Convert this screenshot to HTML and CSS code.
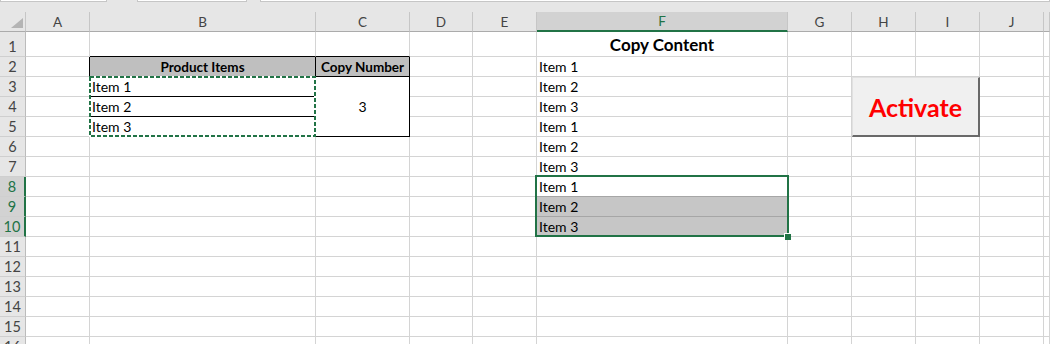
FILE: index.html
```html
<!DOCTYPE html>
<html lang="en">
<head>
    <meta charset="UTF-8">
    <meta name="viewport" content="width=device-width, initial-scale=1.0">
    <title>Copy Content</title>
    <link rel="stylesheet" href="styles.css">
</head>
<body>
    <div class="topbar">
        <div class="field field-name"></div>
        <div class="field field-fx"></div>
        <div class="field field-formula"></div>
    </div>
    <div class="sheet">
        <!-- column headers -->
        <div class="c ch corner"><span class="tri"></span></div>
        <div class="c ch">A</div><div class="c ch">B</div><div class="c ch">C</div><div class="c ch">D</div><div class="c ch">E</div>
        <div class="c ch on">F</div><div class="c ch">G</div><div class="c ch">H</div><div class="c ch">I</div><div class="c ch">J</div><div class="c ch"></div>

        <!-- row 1 -->
        <div class="c rh">1</div>
        <div class="c"></div><div class="c bk-b"></div><div class="c bk-b"></div><div class="c"></div><div class="c"></div>
        <div class="c title">Copy Content</div>
        <div class="c"></div><div class="c"></div><div class="c"></div><div class="c"></div><div class="c"></div>

        <!-- row 2 -->
        <div class="c rh">2</div>
        <div class="c bk-r"></div><div class="c th bk-r bk-b">Product Items</div><div class="c th bk-r bk-b">Copy Number</div><div class="c"></div><div class="c"></div>
        <div class="c">Item 1</div>
        <div class="c"></div><div class="c"></div><div class="c"></div><div class="c"></div><div class="c"></div>

        <!-- row 3 -->
        <div class="c rh">3</div>
        <div class="c bk-r"></div><div class="c bk-r bk-b">Item 1</div><div class="c merge bk-r bk-b">3</div><div class="c"></div><div class="c"></div>
        <div class="c">Item 2</div>
        <div class="c"></div><div class="c"></div><div class="c"></div><div class="c"></div><div class="c"></div>

        <!-- row 4 -->
        <div class="c rh">4</div>
        <div class="c bk-r"></div><div class="c bk-r bk-b">Item 2</div><div class="c"></div><div class="c"></div>
        <div class="c">Item 3</div>
        <div class="c"></div><div class="c"></div><div class="c"></div><div class="c"></div><div class="c"></div>

        <!-- row 5 -->
        <div class="c rh">5</div>
        <div class="c bk-r"></div><div class="c bk-r bk-b">Item 3</div><div class="c"></div><div class="c"></div>
        <div class="c">Item 1</div>
        <div class="c"></div><div class="c"></div><div class="c"></div><div class="c"></div><div class="c"></div>

        <!-- row 6 -->
        <div class="c rh">6</div>
        <div class="c"></div><div class="c"></div><div class="c"></div><div class="c"></div><div class="c"></div>
        <div class="c">Item 2</div>
        <div class="c"></div><div class="c"></div><div class="c"></div><div class="c"></div><div class="c"></div>

        <!-- row 7 -->
        <div class="c rh">7</div>
        <div class="c"></div><div class="c"></div><div class="c"></div><div class="c"></div><div class="c"></div>
        <div class="c">Item 3</div>
        <div class="c"></div><div class="c"></div><div class="c"></div><div class="c"></div><div class="c"></div>

        <!-- row 8 -->
        <div class="c rh on">8</div>
        <div class="c"></div><div class="c"></div><div class="c"></div><div class="c"></div><div class="c"></div>
        <div class="c sep">Item 1</div>
        <div class="c"></div><div class="c"></div><div class="c"></div><div class="c"></div><div class="c"></div>

        <!-- row 9 -->
        <div class="c rh on">9</div>
        <div class="c"></div><div class="c"></div><div class="c"></div><div class="c"></div><div class="c"></div>
        <div class="c sel sep">Item 2</div>
        <div class="c"></div><div class="c"></div><div class="c"></div><div class="c"></div><div class="c"></div>

        <!-- row 10 -->
        <div class="c rh on">10</div>
        <div class="c"></div><div class="c"></div><div class="c"></div><div class="c"></div><div class="c"></div>
        <div class="c sel">Item 3</div>
        <div class="c"></div><div class="c"></div><div class="c"></div><div class="c"></div><div class="c"></div>

        <!-- rows 11 - 16 -->
        <div class="c rh">11</div>
        <div class="c"></div><div class="c"></div><div class="c"></div><div class="c"></div><div class="c"></div><div class="c"></div>
        <div class="c"></div><div class="c"></div><div class="c"></div><div class="c"></div><div class="c"></div>

        <div class="c rh">12</div>
        <div class="c"></div><div class="c"></div><div class="c"></div><div class="c"></div><div class="c"></div><div class="c"></div>
        <div class="c"></div><div class="c"></div><div class="c"></div><div class="c"></div><div class="c"></div>

        <div class="c rh">13</div>
        <div class="c"></div><div class="c"></div><div class="c"></div><div class="c"></div><div class="c"></div><div class="c"></div>
        <div class="c"></div><div class="c"></div><div class="c"></div><div class="c"></div><div class="c"></div>

        <div class="c rh">14</div>
        <div class="c"></div><div class="c"></div><div class="c"></div><div class="c"></div><div class="c"></div><div class="c"></div>
        <div class="c"></div><div class="c"></div><div class="c"></div><div class="c"></div><div class="c"></div>

        <div class="c rh">15</div>
        <div class="c"></div><div class="c"></div><div class="c"></div><div class="c"></div><div class="c"></div><div class="c"></div>
        <div class="c"></div><div class="c"></div><div class="c"></div><div class="c"></div><div class="c"></div>

        <div class="c rh">16</div>
        <div class="c"></div><div class="c"></div><div class="c"></div><div class="c"></div><div class="c"></div><div class="c"></div>
        <div class="c"></div><div class="c"></div><div class="c"></div><div class="c"></div><div class="c"></div>

        <!-- copy marquee around B3:B5 -->
        <svg class="marquee" width="227" height="61" viewBox="0 0 227 61">
            <rect x="1" y="1" width="225" height="59" fill="none" stroke="#fff" stroke-width="2"/>
            <rect x="1" y="1" width="225" height="59" fill="none" stroke="#217346" stroke-width="2" stroke-dasharray="4 2"/>
        </svg>

        <!-- selected range F8:F10 -->
        <div class="selection"></div>
        <div class="handle"></div>

        <button class="activate">Activate</button>
    </div>
</body>
</html>
```

FILE: styles.css
```css
* {
    margin: 0;
    padding: 0;
    box-sizing: border-box;
}

body {
    width: 1050px;
    height: 344px;
    overflow: hidden;
    background: #fff;
    font-family: 'Lato', 'Liberation Sans', sans-serif;
    font-size: 14px;
    color: #000;
}

.topbar {
    height: 12px;
    background: #e6e6e6;
    display: flex;
    align-items: flex-start;
}

.field {
    height: 2px;
    background: #fff;
    border: 1px solid #c6c6c6;
    border-top: 0;
}

.field-name {
    width: 107px;
}

.field-fx {
    width: 110px;
    margin-left: 30px;
}

.field-formula {
    flex: 1;
    margin-left: 13px;
}

.sheet {
    position: relative;
    display: grid;
    grid-template-columns: 26px 64px 226px 94px 63px 64px 251px 64px 64px 64px 64px 1fr;
    grid-template-rows: 20px 25px repeat(15, 20px);
}

.c {
    display: flex;
    align-items: flex-end;
    padding: 0 2px;
    line-height: 18px;
    white-space: nowrap;
    overflow: hidden;
    border-right: 1px solid #d4d4d4;
    border-bottom: 1px solid #d4d4d4;
}

.ch {
    background: #e6e6e6;
    color: #444;
    font-size: 13.5px;
    justify-content: center;
    align-items: center;
    border-right-color: #c6c6c6;
    border-bottom-color: #ababab;
}

.ch.on {
    background: #d2d2d2;
    color: #217346;
    border-bottom: 2px solid #217346;
}

.rh {
    background: #e6e6e6;
    color: #444;
    font-size: 14.5px;
    justify-content: center;
    border-right-color: #bcbcbc;
    border-bottom-color: #cfcfcf;
}

.rh.on {
    background: #d2d2d2;
    color: #217346;
    border-right: 2px solid #217346;
}

.corner {
    justify-content: flex-end;
    align-items: flex-end;
    padding: 0 2px 3px 0;
}

.tri {
    width: 0;
    height: 0;
    border-left: 12px solid transparent;
    border-bottom: 10px solid #b4b4b4;
}

.th {
    background: #bfbfbf;
    font-size: 13.5px;
    font-weight: 700;
    justify-content: center;
}

.bk-r {
    border-right-color: #000;
}

.bk-b {
    border-bottom-color: #000;
}

.merge {
    grid-row: span 3;
    align-items: center;
    justify-content: center;
}

.title {
    font-weight: 700;
    font-size: 17px;
    line-height: 22px;
    justify-content: center;
}

.sel {
    background: #c6c6c6;
}

.sep {
    border-bottom-color: #a6a6a6;
}

.marquee {
    position: absolute;
    left: 89px;
    top: 64px;
}

.selection {
    position: absolute;
    left: 535px;
    top: 163px;
    width: 254px;
    height: 62px;
    border: 2px solid #217346;
}

.handle {
    position: absolute;
    left: 784px;
    top: 221px;
    width: 7px;
    height: 7px;
    background: #217346;
    border-left: 1px solid #fff;
    border-top: 1px solid #fff;
}

.activate {
    position: absolute;
    left: 852px;
    top: 65px;
    width: 128px;
    height: 60px;
    display: flex;
    align-items: center;
    justify-content: center;
    background: #f0f0f0;
    border: 1px solid #e1e1e1;
    border-right: 2px solid #696969;
    border-bottom: 2px solid #696969;
    color: #f00;
    font-family: 'Lato', 'Liberation Sans', sans-serif;
    font-size: 25px;
    font-weight: 700;
}
```
